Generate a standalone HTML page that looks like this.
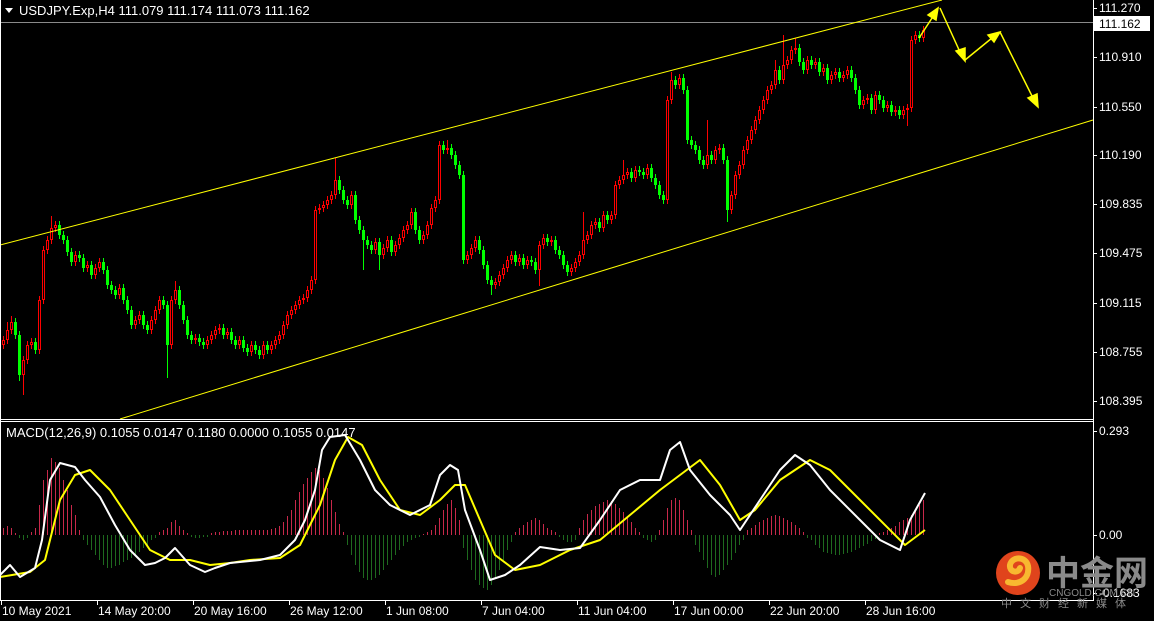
<!DOCTYPE html>
<html><head><meta charset="utf-8"><style>
html,body{margin:0;padding:0;background:#000;width:1154px;height:621px;overflow:hidden}
svg{display:block}
text{font-family:"Liberation Sans","Noto Sans CJK SC",sans-serif;font-size:12px;fill:#fff}
</style></head><body>
<svg width="1154" height="621" xmlns="http://www.w3.org/2000/svg">
<rect width="1154" height="621" fill="#000"/>
<path stroke="#c8284a" stroke-width="1" fill="none" d="M3.5 535V528M7.5 535V526M11.5 535V528M15.5 535V533M31.5 535V532M35.5 535V528M39.5 535V505M43.5 535V480M47.5 535V470M51.5 535V458M55.5 535V462M59.5 535V468M63.5 535V480M67.5 535V490M71.5 535V505M75.5 535V515M79.5 535V530M159.5 535V532M163.5 535V530M167.5 535V528M171.5 535V522M175.5 535V520M179.5 535V526M183.5 535V530M187.5 535V533M211.5 535V533M215.5 535V532M219.5 535V532M223.5 535V531M227.5 535V531M231.5 535V531M235.5 535V530M239.5 535V530M243.5 535V530M247.5 535V530M251.5 535V530M255.5 535V530M259.5 535V530M263.5 535V530M267.5 535V530M271.5 535V529M275.5 535V528M279.5 535V526M283.5 535V522M287.5 535V516M291.5 535V510M295.5 535V500M299.5 535V492M303.5 535V484M307.5 535V478M311.5 535V472M315.5 535V468M319.5 535V470M323.5 535V478M327.5 535V488M331.5 535V500M335.5 535V512M339.5 535V524M343.5 535V532M423.5 535V534M427.5 535V532M431.5 535V530M435.5 535V525M439.5 535V518M443.5 535V510M447.5 535V504M451.5 535V500M455.5 535V508M459.5 535V520M515.5 535V532M519.5 535V528M523.5 535V525M527.5 535V522M531.5 535V520M535.5 535V518M539.5 535V520M543.5 535V524M547.5 535V528M551.5 535V530M555.5 535V532M579.5 535V528M583.5 535V520M587.5 535V514M591.5 535V510M595.5 535V506M599.5 535V504M603.5 535V502M607.5 535V500M611.5 535V501M615.5 535V504M619.5 535V508M623.5 535V512M627.5 535V516M631.5 535V522M635.5 535V528M639.5 535V532M659.5 535V530M663.5 535V520M667.5 535V508M671.5 535V500M675.5 535V498M679.5 535V500M683.5 535V510M687.5 535V520M691.5 535V530M747.5 535V530M751.5 535V528M755.5 535V525M759.5 535V522M763.5 535V520M767.5 535V518M771.5 535V516M775.5 535V515M779.5 535V516M783.5 535V518M787.5 535V520M791.5 535V522M795.5 535V525M799.5 535V528M803.5 535V532M879.5 535V533M883.5 535V532M887.5 535V530M891.5 535V528M895.5 535V526M899.5 535V522M903.5 535V520M907.5 535V518M911.5 535V515M915.5 535V510M919.5 535V505M923.5 535V500"/>
<path stroke="#1e6a1e" stroke-width="1" fill="none" d="M19.5 535V538M23.5 535V540M27.5 535V538M83.5 535V540M87.5 535V545M91.5 535V550M95.5 535V555M99.5 535V560M103.5 535V565M107.5 535V568M111.5 535V568M115.5 535V566M119.5 535V565M123.5 535V562M127.5 535V560M131.5 535V558M135.5 535V555M139.5 535V552M143.5 535V548M147.5 535V545M151.5 535V540M155.5 535V538M191.5 535V537M195.5 535V538M199.5 535V538M203.5 535V537M207.5 535V537M347.5 535V545M351.5 535V555M355.5 535V565M359.5 535V572M363.5 535V578M367.5 535V580M371.5 535V580M375.5 535V578M379.5 535V575M383.5 535V570M387.5 535V565M391.5 535V560M395.5 535V555M399.5 535V550M403.5 535V546M407.5 535V542M411.5 535V540M415.5 535V538M419.5 535V537M463.5 535V548M467.5 535V560M471.5 535V570M475.5 535V580M479.5 535V585M483.5 535V588M487.5 535V590M491.5 535V585M495.5 535V578M499.5 535V570M503.5 535V560M507.5 535V550M511.5 535V542M559.5 535V537M563.5 535V540M567.5 535V542M571.5 535V542M575.5 535V540M643.5 535V538M647.5 535V540M651.5 535V542M655.5 535V540M695.5 535V545M699.5 535V552M703.5 535V560M707.5 535V568M711.5 535V575M715.5 535V577M719.5 535V575M723.5 535V570M727.5 535V565M731.5 535V560M735.5 535V553M739.5 535V545M743.5 535V540M807.5 535V538M811.5 535V540M815.5 535V545M819.5 535V548M823.5 535V552M827.5 535V553M831.5 535V554M835.5 535V555M839.5 535V555M843.5 535V554M847.5 535V553M851.5 535V552M855.5 535V550M859.5 535V548M863.5 535V546M867.5 535V544M871.5 535V541M875.5 535V539"/>
<path stroke="#00ff00" stroke-width="1" fill="none" d="M15.5 318V339M19.5 331V381M35.5 338V354M59.5 221V239M63.5 231V244M67.5 236V256M71.5 248V266M79.5 251V262M83.5 254V272M91.5 261V279M103.5 258V274M107.5 266V289M111.5 281V294M115.5 286V299M123.5 284V304M127.5 296V314M131.5 306V329M143.5 311V329M147.5 321V334M163.5 296V309M167.5 301V378M179.5 286V309M183.5 301V324M187.5 316V339M191.5 331V344M199.5 334V346M203.5 338V349M223.5 324V339M231.5 328V344M235.5 336V349M243.5 336V352M247.5 344V356M255.5 341V354M259.5 346V359M267.5 341V354M339.5 176V194M343.5 186V204M347.5 196V209M355.5 191V224M359.5 216V234M363.5 226V270M367.5 236V249M371.5 241V254M379.5 238V270M391.5 236V256M415.5 208V234M419.5 226V244M443.5 141V154M451.5 144V159M455.5 151V169M459.5 161V179M463.5 171V264M479.5 236V254M483.5 246V269M487.5 261V284M491.5 276V295M515.5 251V266M523.5 254V269M531.5 256V266M535.5 258V274M547.5 234V246M555.5 236V254M559.5 246V259M563.5 251V269M567.5 261V276M599.5 218V232M607.5 211V224M631.5 168V182M639.5 166V176M643.5 168V179M651.5 164V182M655.5 174V189M659.5 181V199M663.5 191V204M675.5 76V89M683.5 74V94M687.5 86V144M691.5 136V149M695.5 141V154M699.5 146V164M703.5 156V169M711.5 151V164M723.5 144V164M727.5 156V222M779.5 66V84M799.5 44V66M803.5 58V74M811.5 56V69M819.5 58V76M827.5 64V84M839.5 68V82M851.5 66V82M855.5 74V94M859.5 86V109M871.5 94V114M879.5 91V104M883.5 96V112M891.5 101V116M899.5 106V119M919.5 31V42"/>
<path stroke="#ff0000" stroke-width="1" fill="none" d="M3.5 336V349M7.5 322V344M11.5 316V334M23.5 356V395M27.5 341V364M31.5 338V349M39.5 296V354M43.5 246V304M47.5 236V254M51.5 216V244M55.5 221V232M75.5 251V266M87.5 261V272M95.5 264V279M99.5 258V272M119.5 284V299M135.5 316V329M139.5 311V324M151.5 316V334M155.5 306V324M159.5 296V314M171.5 296V349M175.5 281V304M195.5 334V344M207.5 336V349M211.5 331V344M215.5 326V339M219.5 324V334M227.5 328V339M239.5 336V349M251.5 341V356M263.5 341V359M271.5 341V354M275.5 336V349M279.5 331V344M283.5 321V339M287.5 311V329M291.5 306V319M295.5 301V314M299.5 296V309M303.5 294V304M307.5 286V302M311.5 276V294M315.5 206V284M319.5 204V214M323.5 201V212M327.5 196V209M331.5 191V204M335.5 158V199M351.5 191V209M375.5 238V254M383.5 244V259M387.5 236V252M395.5 241V256M399.5 234V249M403.5 226V242M407.5 221V234M411.5 208V229M423.5 231V244M427.5 221V239M431.5 204V229M435.5 196V212M439.5 141V204M447.5 140V154M467.5 251V264M471.5 244V259M475.5 236V252M495.5 278V289M499.5 271V286M503.5 264V279M507.5 256V272M511.5 251V264M519.5 254V266M527.5 256V269M539.5 241V286M543.5 234V249M551.5 236V246M571.5 264V276M575.5 258V272M579.5 251V266M583.5 212V259M587.5 231V244M591.5 221V239M595.5 218V229M603.5 211V232M611.5 211V224M615.5 181V219M619.5 176V189M623.5 160V184M627.5 168V179M635.5 166V182M647.5 164V179M667.5 96V204M671.5 72V104M679.5 74V89M707.5 120V169M715.5 146V164M719.5 144V154M731.5 191V214M735.5 171V199M739.5 161V179M743.5 146V169M747.5 136V154M751.5 126V144M755.5 116V134M759.5 106V124M763.5 96V114M767.5 86V104M771.5 81V94M775.5 60V89M783.5 35V84M787.5 56V69M791.5 46V64M795.5 38V54M807.5 56V74M815.5 58V69M823.5 64V76M831.5 71V84M835.5 68V79M843.5 71V82M847.5 66V79M863.5 96V109M867.5 94V104M875.5 91V114M887.5 101V112M895.5 106V116M903.5 106V119M907.5 104V126M911.5 36V112M915.5 31V44M923.5 26V42"/>
<path fill="#00ff00" d="M14 322h3V335h-3zM18 335h3V375h-3zM34 342h3V350h-3zM58 225h3V235h-3zM62 235h3V240h-3zM66 240h3V252h-3zM70 252h3V262h-3zM78 255h3V258h-3zM82 258h3V268h-3zM90 265h3V275h-3zM102 262h3V270h-3zM106 270h3V285h-3zM110 285h3V290h-3zM114 290h3V295h-3zM122 288h3V300h-3zM126 300h3V310h-3zM130 310h3V325h-3zM142 315h3V325h-3zM146 325h3V330h-3zM162 300h3V305h-3zM166 305h3V345h-3zM178 290h3V305h-3zM182 305h3V320h-3zM186 320h3V335h-3zM190 335h3V340h-3zM198 338h3V342h-3zM202 342h3V345h-3zM222 328h3V335h-3zM230 332h3V340h-3zM234 340h3V345h-3zM242 340h3V348h-3zM246 348h3V352h-3zM254 345h3V350h-3zM258 350h3V355h-3zM266 345h3V350h-3zM338 180h3V190h-3zM342 190h3V200h-3zM346 200h3V205h-3zM354 195h3V220h-3zM358 220h3V230h-3zM362 230h3V240h-3zM366 240h3V245h-3zM370 245h3V250h-3zM378 242h3V255h-3zM390 240h3V252h-3zM414 212h3V230h-3zM418 230h3V240h-3zM442 145h3V150h-3zM450 148h3V155h-3zM454 155h3V165h-3zM458 165h3V175h-3zM462 175h3V260h-3zM478 240h3V250h-3zM482 250h3V265h-3zM486 265h3V280h-3zM490 280h3V285h-3zM514 255h3V262h-3zM522 258h3V265h-3zM530 260h3V262h-3zM534 262h3V270h-3zM546 238h3V242h-3zM554 240h3V250h-3zM558 250h3V255h-3zM562 255h3V265h-3zM566 265h3V272h-3zM598 222h3V228h-3zM606 215h3V220h-3zM630 172h3V178h-3zM638 170h3V172h-3zM642 172h3V175h-3zM650 168h3V178h-3zM654 178h3V185h-3zM658 185h3V195h-3zM662 195h3V200h-3zM674 80h3V85h-3zM682 78h3V90h-3zM686 90h3V140h-3zM690 140h3V145h-3zM694 145h3V150h-3zM698 150h3V160h-3zM702 160h3V165h-3zM710 155h3V160h-3zM722 148h3V160h-3zM726 160h3V210h-3zM778 70h3V80h-3zM798 48h3V62h-3zM802 62h3V70h-3zM810 60h3V65h-3zM818 62h3V72h-3zM826 68h3V80h-3zM838 72h3V78h-3zM850 70h3V78h-3zM854 78h3V90h-3zM858 90h3V105h-3zM870 98h3V110h-3zM878 95h3V100h-3zM882 100h3V108h-3zM890 105h3V112h-3zM898 110h3V115h-3zM918 35h3V38h-3z"/>
<path fill="#000" stroke="#ff0000" stroke-width="1" d="M2.5 340.5h2V344.5h-2zM6.5 330.5h2V339.5h-2zM10.5 322.5h2V329.5h-2zM22.5 360.5h2V374.5h-2zM26.5 345.5h2V359.5h-2zM30.5 342.5h2V344.5h-2zM38.5 300.5h2V349.5h-2zM42.5 250.5h2V299.5h-2zM46.5 240.5h2V249.5h-2zM50.5 228.5h2V239.5h-2zM54.5 225.5h2V227.5h-2zM74.5 255.5h2V261.5h-2zM86.5 265.5h2V267.5h-2zM94.5 268.5h2V274.5h-2zM98.5 262.5h2V267.5h-2zM118.5 288.5h2V294.5h-2zM134.5 320.5h2V324.5h-2zM138.5 315.5h2V319.5h-2zM150.5 320.5h2V329.5h-2zM154.5 310.5h2V319.5h-2zM158.5 300.5h2V309.5h-2zM170.5 300.5h2V344.5h-2zM174.5 290.5h2V299.5h-2zM194.5 338.5h2V339.5h-2zM206.5 340.5h2V344.5h-2zM210.5 335.5h2V339.5h-2zM214.5 330.5h2V334.5h-2zM218.5 328.5h2V329.5h-2zM226.5 332.5h2V334.5h-2zM238.5 340.5h2V344.5h-2zM250.5 345.5h2V351.5h-2zM262.5 345.5h2V354.5h-2zM270.5 345.5h2V349.5h-2zM274.5 340.5h2V344.5h-2zM278.5 335.5h2V339.5h-2zM282.5 325.5h2V334.5h-2zM286.5 315.5h2V324.5h-2zM290.5 310.5h2V314.5h-2zM294.5 305.5h2V309.5h-2zM298.5 300.5h2V304.5h-2zM302.5 298.5h2V299.5h-2zM306.5 290.5h2V297.5h-2zM310.5 280.5h2V289.5h-2zM314.5 210.5h2V279.5h-2zM318.5 208.5h2V209.5h-2zM322.5 205.5h2V207.5h-2zM326.5 200.5h2V204.5h-2zM330.5 195.5h2V199.5h-2zM334.5 180.5h2V194.5h-2zM350.5 195.5h2V204.5h-2zM374.5 242.5h2V249.5h-2zM382.5 248.5h2V254.5h-2zM386.5 240.5h2V247.5h-2zM394.5 245.5h2V251.5h-2zM398.5 238.5h2V244.5h-2zM402.5 230.5h2V237.5h-2zM406.5 225.5h2V229.5h-2zM410.5 212.5h2V224.5h-2zM422.5 235.5h2V239.5h-2zM426.5 225.5h2V234.5h-2zM430.5 208.5h2V224.5h-2zM434.5 200.5h2V207.5h-2zM438.5 145.5h2V199.5h-2zM446.5 148.5h2V149.5h-2zM466.5 255.5h2V259.5h-2zM470.5 248.5h2V254.5h-2zM474.5 240.5h2V247.5h-2zM494.5 282.5h2V284.5h-2zM498.5 275.5h2V281.5h-2zM502.5 268.5h2V274.5h-2zM506.5 260.5h2V267.5h-2zM510.5 255.5h2V259.5h-2zM518.5 258.5h2V261.5h-2zM526.5 260.5h2V264.5h-2zM538.5 245.5h2V269.5h-2zM542.5 238.5h2V244.5h-2zM550.5 240.5h2V241.5h-2zM570.5 268.5h2V271.5h-2zM574.5 262.5h2V267.5h-2zM578.5 255.5h2V261.5h-2zM582.5 240.5h2V254.5h-2zM586.5 235.5h2V239.5h-2zM590.5 225.5h2V234.5h-2zM594.5 222.5h2V224.5h-2zM602.5 215.5h2V227.5h-2zM610.5 215.5h2V219.5h-2zM614.5 185.5h2V214.5h-2zM618.5 180.5h2V184.5h-2zM622.5 175.5h2V179.5h-2zM626.5 172.5h2V174.5h-2zM634.5 170.5h2V177.5h-2zM646.5 168.5h2V174.5h-2zM666.5 100.5h2V199.5h-2zM670.5 80.5h2V99.5h-2zM678.5 78.5h2V84.5h-2zM706.5 155.5h2V164.5h-2zM714.5 150.5h2V159.5h-2zM718.5 148.5h2V149.5h-2zM730.5 195.5h2V209.5h-2zM734.5 175.5h2V194.5h-2zM738.5 165.5h2V174.5h-2zM742.5 150.5h2V164.5h-2zM746.5 140.5h2V149.5h-2zM750.5 130.5h2V139.5h-2zM754.5 120.5h2V129.5h-2zM758.5 110.5h2V119.5h-2zM762.5 100.5h2V109.5h-2zM766.5 90.5h2V99.5h-2zM770.5 85.5h2V89.5h-2zM774.5 70.5h2V84.5h-2zM782.5 65.5h2V79.5h-2zM786.5 60.5h2V64.5h-2zM790.5 50.5h2V59.5h-2zM794.5 48.5h2V49.5h-2zM806.5 60.5h2V69.5h-2zM814.5 62.5h2V64.5h-2zM822.5 68.5h2V71.5h-2zM830.5 75.5h2V79.5h-2zM834.5 72.5h2V74.5h-2zM842.5 75.5h2V77.5h-2zM846.5 70.5h2V74.5h-2zM862.5 100.5h2V104.5h-2zM866.5 98.5h2V99.5h-2zM874.5 95.5h2V109.5h-2zM886.5 105.5h2V107.5h-2zM894.5 110.5h2V111.5h-2zM902.5 110.5h2V114.5h-2zM906.5 108.5h2V109.5h-2zM910.5 40.5h2V107.5h-2zM914.5 35.5h2V39.5h-2zM922.5 30.5h2V37.5h-2z"/>
<line x1="0" y1="22.5" x2="1093" y2="22.5" stroke="#8a8a8a" stroke-width="1"/>
<line x1="0" y1="245" x2="942" y2="0" stroke="#ffff00" stroke-width="1"/>
<line x1="120" y1="419" x2="1093" y2="120" stroke="#ffff00" stroke-width="1"/>
<polyline fill="none" stroke="#ffff00" stroke-width="2" stroke-linejoin="round" points="0,577 30,572 45,560 60,500 75,475 90,470 110,490 130,520 150,550 170,560 190,560 210,565 230,563 250,560 280,558 300,545 320,505 335,460 348,437 362,445 380,480 400,510 420,515 440,500 455,485 465,485 480,520 495,555 515,570 540,565 570,550 600,540 630,515 660,490 680,475 700,460 720,485 740,520 755,510 780,480 810,460 830,470 860,500 880,520 905,545 925,530"/>
<polyline fill="none" stroke="#ffffff" stroke-width="2" stroke-linejoin="round" points="0,575 10,565 20,577 35,568 42,540 50,480 60,463 75,467 85,480 100,497 115,525 130,550 145,565 155,563 165,558 175,548 190,565 205,572 215,568 230,563 260,560 280,555 295,540 305,520 315,490 322,450 330,437 345,435 360,460 375,490 390,505 410,515 430,505 440,475 450,465 458,470 465,510 480,550 490,580 505,575 520,565 540,547 560,550 580,548 600,520 620,490 640,480 660,480 670,450 680,442 690,470 710,495 730,515 740,530 760,500 780,470 795,455 810,465 830,490 860,520 880,540 900,550 910,520 925,493"/>
<g fill="#ffff00" stroke="#ffff00" stroke-width="1.5">
<line x1="919" y1="38" x2="934" y2="15"/><polygon points="938,8 928,15 936,20"/>
<line x1="940" y1="8" x2="960" y2="52"/><polygon points="965,61 956,51 965,48"/>
<line x1="965" y1="60" x2="992" y2="38"/><polygon points="1000,32 988,35 994,42"/>
<line x1="1000" y1="32" x2="1033" y2="98"/><polygon points="1038,107 1028,98 1037,94"/>
</g>
<g stroke="#fff" stroke-width="1">
<line x1="0.5" y1="0" x2="0.5" y2="600"/>
<line x1="0" y1="419.5" x2="1093" y2="419.5"/>
<line x1="0" y1="421.5" x2="1093" y2="421.5"/>
<line x1="0" y1="600.5" x2="1093" y2="600.5"/>
<line x1="1093.5" y1="0" x2="1093.5" y2="601"/>
<path d="M1093 8.5h4M1093 57.5h4M1093 107.5h4M1093 155.5h4M1093 204.5h4M1093 253.5h4M1093 303.5h4M1093 352.5h4M1093 401.5h4M1093 431.5h4M1093 535.5h4M1093 593.5h4M1.5 600v5M97.5 600v5M193.5 600v5M289.5 600v5M385.5 600v5M481.5 600v5M577.5 600v5M673.5 600v5M769.5 600v5M865.5 600v5"/>
</g>
<polygon points="5,8 13,8 9,13" fill="#fff"/>
<text x="19" y="15" style="font-size:13px">USDJPY.Exp,H4  111.079 111.174 111.073 111.162</text>
<text x="6" y="437" style="font-size:13px">MACD(12,26,9) 0.1055 0.0147 0.1180 0.0000 0.1055 0.0147</text>
<rect x="1094" y="16" width="56" height="15" fill="#fff"/>
<text x="1099" y="28" style="fill:#000">111.162</text>
<text x="1099" y="12">111.270</text>
<text x="1099" y="61">110.910</text>
<text x="1099" y="111">110.550</text>
<text x="1099" y="159">110.190</text>
<text x="1099" y="208">109.835</text>
<text x="1099" y="257">109.475</text>
<text x="1099" y="307">109.115</text>
<text x="1099" y="356">108.755</text>
<text x="1099" y="405">108.395</text>
<text x="1099" y="435">0.293</text>
<text x="1099" y="539">0.00</text>
<text x="1099" y="597">-0.1683</text>
<text x="2" y="615">10 May 2021</text>
<text x="98" y="615">14 May 20:00</text>
<text x="194" y="615">20 May 16:00</text>
<text x="290" y="615">26 May 12:00</text>
<text x="386" y="615">1 Jun 08:00</text>
<text x="482" y="615">7 Jun 04:00</text>
<text x="578" y="615">11 Jun 04:00</text>
<text x="674" y="615">17 Jun 00:00</text>
<text x="770" y="615">22 Jun 20:00</text>
<text x="866" y="615">28 Jun 16:00</text>
<circle cx="1018" cy="573" r="22" fill="#e0441c"/>
<path d="M1008,582 C1020,586 1030,578 1028,566 C1026,556 1012,556 1010,565 C1009,572 1018,574 1020,568" fill="none" stroke="#f8b830" stroke-width="6" stroke-linecap="round"/>
<text x="1046" y="585" style="font-size:34px;font-weight:bold;fill:#8a8a8a">中金网</text>
<text x="1049" y="596" style="font-size:10px;fill:#8a8a8a">CNGOLD.COM.CN</text>
<text x="1001" y="607" style="font-size:11px;fill:#8a8a8a;letter-spacing:8px">中文财经新媒体</text>
</svg>
</body></html>
